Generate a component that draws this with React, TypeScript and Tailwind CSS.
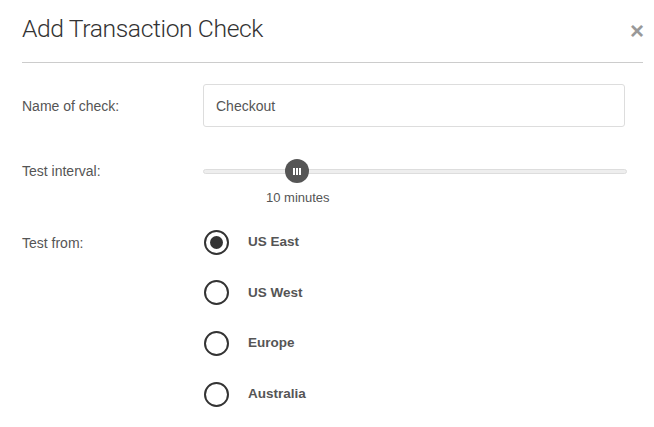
import React, { useState } from 'react';

const regions = ['US East', 'US West', 'Europe', 'Australia'];

function Radio({ checked }: { checked: boolean }) {
  return (
    <span className="w-[25px] h-[25px] rounded-full border-2 border-[#333] flex items-center justify-center shrink-0">
      {checked && <span className="w-[13px] h-[13px] rounded-full bg-[#333]" />}
    </span>
  );
}

export default function App() {
  const [region, setRegion] = useState('US East');
  const [name, setName] = useState('Checkout');

  return (
    <div className="w-[654px] h-[427px] bg-white text-[#555] font-['Liberation_Sans',Arial,sans-serif] pl-[22px] pr-[11px]">
      {/* Header */}
      <div className="flex items-center justify-between h-[63px] border-b border-[#ccc] pb-[4px]">
        <h1 className="font-['Roboto',sans-serif] font-light text-[24.7px] tracking-[-0.4px] text-[#333]">
          Add Transaction Check
        </h1>
        <button type="button" className="text-[#999] text-[24px] font-bold leading-none mr-[-1px] mt-[4px]" aria-label="Close">
          ×
        </button>
      </div>

      {/* Name */}
      <div className="flex items-center mt-[21px] text-[14px]">
        <label className="w-[181px] pt-[2px]">Name of check:</label>
        <input
          value={name}
          onChange={e => setName(e.target.value)}
          className="w-[422px] h-[43px] border border-[#ddd] rounded-[3px] px-[12px] text-[14px] text-[#555] outline-none"
        />
      </div>

      {/* Interval */}
      <div className="flex mt-[32px] text-[14px]">
        <label className="w-[181px] pt-[2px]">Test interval:</label>
        <div className="w-[424px] flex flex-col">
          <div className="relative h-[24px] flex items-center">
            <div className="w-full h-[5px] rounded-full bg-[#eee] border border-[#ddd]" />
            <div className="absolute left-[82px] top-0 w-[24px] h-[24px] rounded-full bg-[#555] flex items-center justify-center gap-[1.5px]">
              <span className="w-[1.5px] h-[7px] bg-white" />
              <span className="w-[1.5px] h-[7px] bg-white" />
              <span className="w-[1.5px] h-[7px] bg-white" />
            </div>
          </div>
          <span className="ml-[63px] mt-[5px] text-[13px]">10 minutes</span>
        </div>
      </div>

      {/* Regions */}
      <div className="flex mt-[22px] text-[14px]">
        <label className="w-[181px] pt-[3px]">Test from:</label>
        <div className="flex flex-col gap-[25.7px]">
          {regions.map(r => (
            <button
              type="button"
              key={r}
              onClick={() => setRegion(r)}
              className="flex items-center gap-[19px] ml-[1px]"
            >
              <Radio checked={region === r} />
              <span className="font-bold text-[13.5px] text-[#555]">{r}</span>
            </button>
          ))}
        </div>
      </div>
    </div>
  );
}
